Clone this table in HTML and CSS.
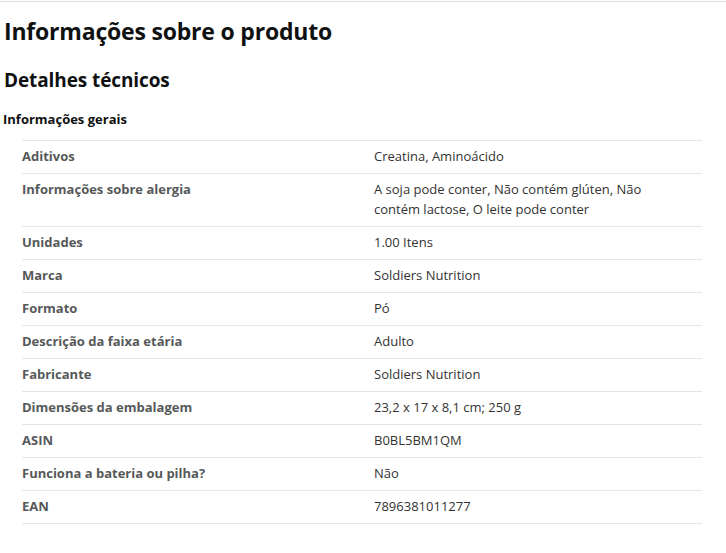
FILE: index.html
```html
<!DOCTYPE html>
<html lang="pt-BR">
<head>
<meta charset="utf-8">
<title>Informações sobre o produto</title>
<link rel="stylesheet" href="styles.css">
</head>
<body>
<section class="product-info">
  <h2 class="title">Informações sobre o produto</h2>
  <h3 class="subtitle">Detalhes técnicos</h3>
  <h4 class="group">Informações gerais</h4>
  <div class="details">
    <div class="row"><div class="label">Aditivos</div><div class="value">Creatina, Aminoácido</div></div>
    <div class="row"><div class="label">Informações sobre alergia</div><div class="value">A soja pode conter, Não contém glúten, Não contém lactose, O leite pode conter</div></div>
    <div class="row"><div class="label">Unidades</div><div class="value">1.00 Itens</div></div>
    <div class="row"><div class="label">Marca</div><div class="value">Soldiers Nutrition</div></div>
    <div class="row"><div class="label">Formato</div><div class="value">Pó</div></div>
    <div class="row"><div class="label">Descrição da faixa etária</div><div class="value">Adulto</div></div>
    <div class="row"><div class="label">Fabricante</div><div class="value">Soldiers Nutrition</div></div>
    <div class="row"><div class="label">Dimensões da embalagem</div><div class="value">23,2 x 17 x 8,1 cm; 250 g</div></div>
    <div class="row"><div class="label">ASIN</div><div class="value">B0BL5BM1QM</div></div>
    <div class="row"><div class="label">Funciona a bateria ou pilha?</div><div class="value">Não</div></div>
    <div class="row"><div class="label">EAN</div><div class="value">7896381011277</div></div>
  </div>
</section>
</body>
</html>
```
FILE: styles.css
```css
html, body {
  margin: 0;
  padding: 0;
  background: #fff;
}
body {
  font-family: "Open Sans", "Noto Sans", sans-serif;
  color: #0f1111;
}
.product-info {
  border-top: 1px solid #dddddd;
  margin-top: 1px;
  padding: 0 4px 0 4px;
}
.title {
  margin: 0;
  padding-top: 11px;
  font-size: 23px;
  line-height: 36px;
  font-weight: 700;
  letter-spacing: -0.2px;
}
.subtitle {
  margin: 19px 0 0 0;
  font-size: 19px;
  line-height: 24px;
  font-weight: 700;
  letter-spacing: -0.1px;
}
.group {
  margin: 19px 0 0 -1px;
  font-size: 13px;
  line-height: 16px;
  font-weight: 700;
}
.details {
  margin: 13px 20px 0 18px;
  border-bottom: 1px solid #e3e6e6;
}
.row {
  display: grid;
  grid-template-columns: 352px 1fr;
  border-top: 1px solid #e3e6e6;
  padding: 5px 0 7px 0;
  font-size: 13px;
  line-height: 20px;
}
.label {
  font-weight: 700;
  color: #565959;
}
.value {
  color: #333333;
  padding-right: 40px;
}
```
